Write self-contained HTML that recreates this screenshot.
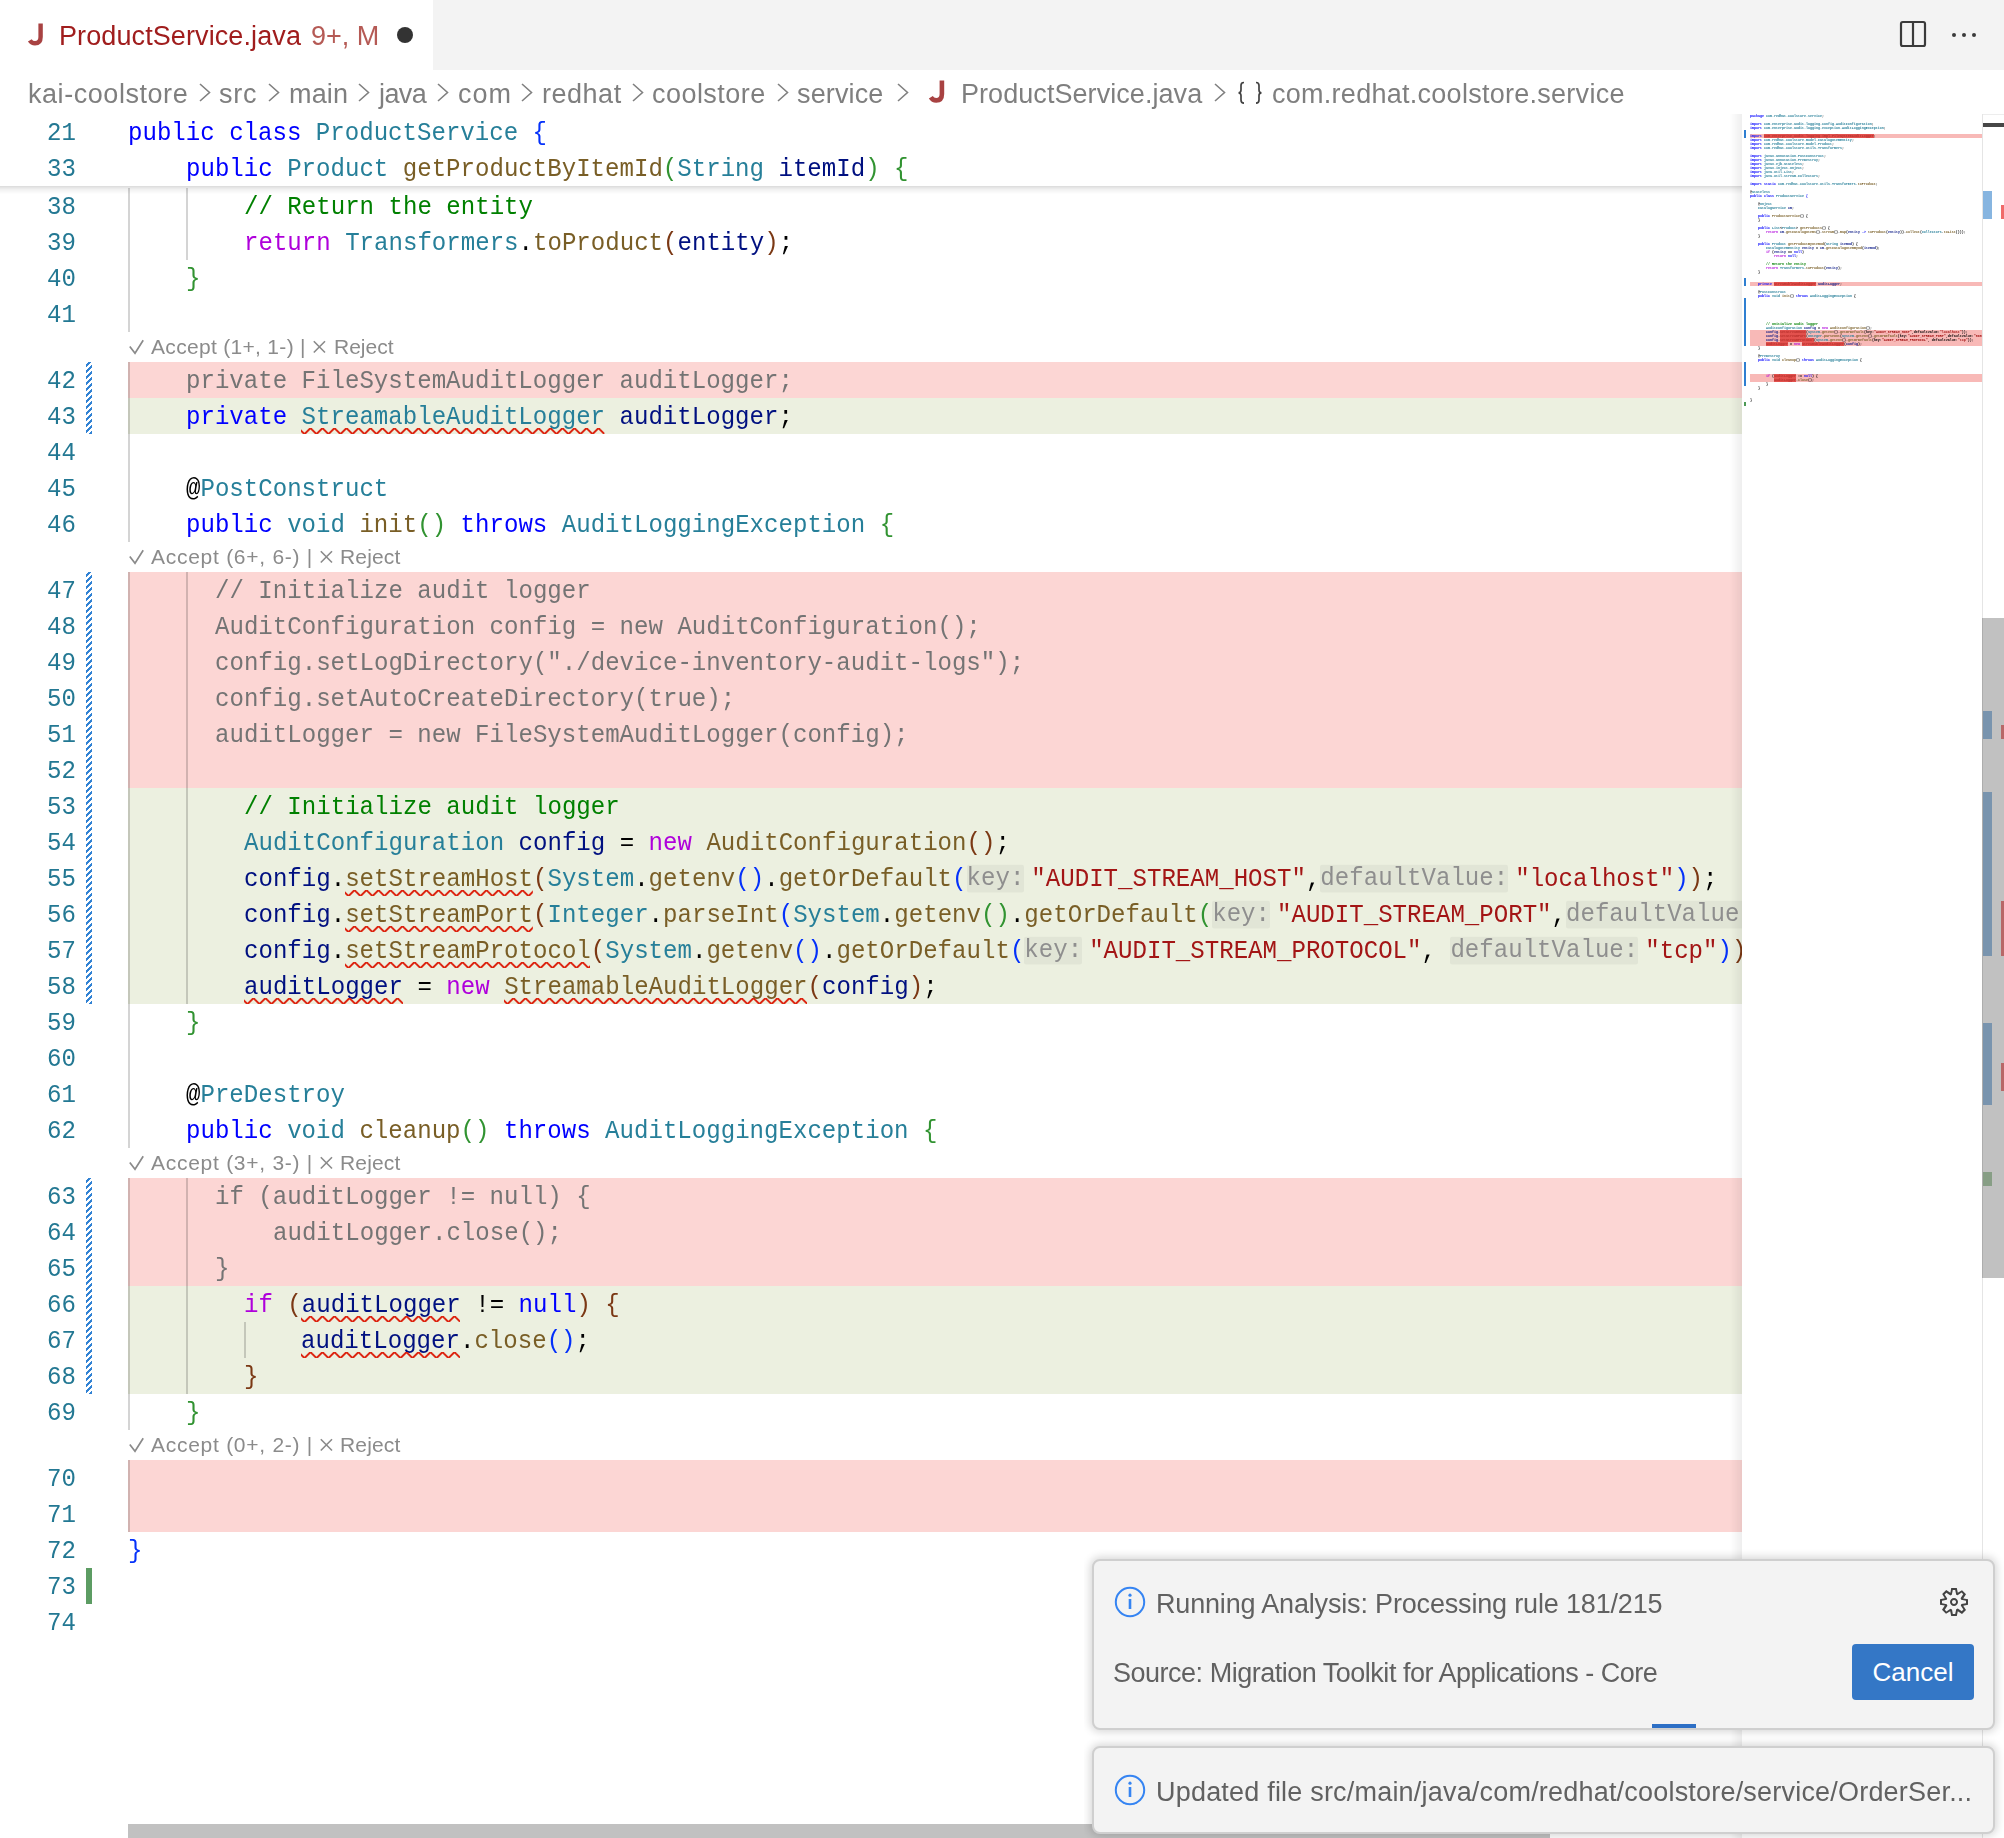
<!DOCTYPE html>
<html><head><meta charset="utf-8">
<style>
html,body{margin:0;padding:0}
body{width:2004px;height:1838px;overflow:hidden;background:#fff;position:relative;font-family:"Liberation Sans",sans-serif}
.tabbar{position:absolute;left:0;top:0;width:2004px;height:70px;background:#f3f3f3}
.tab{position:absolute;left:0;top:0;width:433px;height:70px;background:#fff}
.crumbs{position:absolute;left:0;top:70px;width:2004px;height:44px;background:#fff}
.crumb{position:absolute;top:2px;height:44px;line-height:44px;font-size:27px;color:#7f7f7f;white-space:pre}
.chev{position:absolute;top:13px}
.editor{position:absolute;left:0;top:114px;width:1742px;height:1724px;overflow:hidden}
.ed{position:absolute;left:0;top:-114px;width:1742px;height:1838px}
.bg{position:absolute;left:128px;width:1614px;height:36px}
.guide{position:absolute;width:2px;background:rgba(0,0,0,0.17)}
.ln{position:absolute;left:0;width:76px;text-align:right;height:36px;line-height:36px;font-family:"Liberation Mono",monospace;font-size:24.08px;color:#237893;white-space:pre;transform:translateY(1.7px) scaleY(1.07);transform-origin:0 18px}
.code{position:absolute;height:36px;line-height:36px;font-family:"Liberation Mono",monospace;font-size:24.08px;white-space:pre;transform:translateY(1.7px) scaleY(1.07);transform-origin:0 18px}
.hint{display:inline-block;background:rgba(0,0,0,0.045);color:#8e8e8e;line-height:26px;height:26px;vertical-align:top;margin-top:3.6px;margin-right:7px;border-radius:2px}
.sq{text-decoration:underline wavy #e51400;text-decoration-thickness:2px;text-underline-offset:5px}
.lens{position:absolute;left:127px;height:30px;line-height:30px;font-size:21px;letter-spacing:0.2px;color:#8b8b8b;white-space:pre}
.hatch{position:absolute;left:86px;width:6px;background:repeating-linear-gradient(135deg,#3182d4 0 2.1px,transparent 2.1px 4.24px);background-position:0 3px}
.sticky{position:absolute;left:0;top:114px;width:1742px;height:72px;background:#fff;overflow:hidden}
.toast{position:absolute;width:899px;background:#f3f3f3;border:2px solid #cfcfcf;border-radius:8px;box-shadow:0 0 8px 2px rgba(0,0,0,0.16)}
.ttext{position:absolute;font-size:27px;color:#616161;white-space:pre}
.mm div{position:absolute}
.mm{position:absolute;left:0;top:0;width:1982px;height:1838px;overflow:hidden;clip-path:inset(0 0 0 1742px)}
.mmt{font-family:"Liberation Mono",monospace;font-size:3.333px;line-height:4px;height:4px;white-space:pre;font-weight:bold;will-change:transform}
.code,.ln,.crumb,.ttext,.lens,.tabtxt{will-change:transform}
</style></head><body>
<div class="tabbar">
  <div class="tab">
    <svg style="position:absolute;left:22px;top:16px" width="34" height="34" viewBox="0 0 34 34"><path d="M18.6 7.4 L18.6 21 C18.6 25.6 16.2 27.3 13 27.3 C10.6 27.3 9 26.2 7.8 24.3" fill="none" stroke="#a84242" stroke-width="4.4"/></svg>
    <div class="tabtxt" style="position:absolute;left:58.5px;top:16px;font-size:27px;line-height:40px;color:#a01d1d;white-space:pre;letter-spacing:0.1px">ProductService.java</div>
    <div class="tabtxt" style="position:absolute;left:311px;top:16px;font-size:27px;line-height:40px;color:#b55a55;white-space:pre">9+, M</div>
    <div style="position:absolute;left:397px;top:27px;width:16px;height:16px;border-radius:50%;background:#333"></div>
  </div>
  <svg style="position:absolute;left:1896px;top:17px" width="34" height="34" viewBox="0 0 34 34"><rect x="5" y="5" width="24" height="24" rx="1.8" fill="none" stroke="#3b3b3b" stroke-width="2.2"/><line x1="17" y1="5" x2="17" y2="29" stroke="#3b3b3b" stroke-width="2.2"/></svg>
  <div style="position:absolute;left:1952px;top:33px;width:4px;height:4px;border-radius:50%;background:#3b3b3b"></div>
  <div style="position:absolute;left:1962px;top:33px;width:4px;height:4px;border-radius:50%;background:#3b3b3b"></div>
  <div style="position:absolute;left:1972px;top:33px;width:4px;height:4px;border-radius:50%;background:#3b3b3b"></div>
</div>
<div class="crumbs">
<div class="crumb" style="left:27.9px;letter-spacing:0.55px">kai-coolstore</div>
<div class="crumb" style="left:218.5px;letter-spacing:0.75px">src</div>
<div class="crumb" style="left:288.5px;letter-spacing:0.17px">main</div>
<div class="crumb" style="left:378.5px;letter-spacing:-0.6px">java</div>
<div class="crumb" style="left:457.5px;letter-spacing:1.0px">com</div>
<div class="crumb" style="left:541.5px;letter-spacing:0.52px">redhat</div>
<div class="crumb" style="left:652.2px;letter-spacing:0.45px">coolstore</div>
<div class="crumb" style="left:797.0px;letter-spacing:0.13px">service</div>
<div class="crumb" style="left:960.5px;letter-spacing:0.06px">ProductService.java</div>
<div class="crumb" style="left:1272px;letter-spacing:0.27px">com.redhat.coolstore.service</div>
<svg style="position:absolute;left:1237px;top:11px" width="27" height="24" viewBox="0 0 27 24"><path d="M7 1.5 C4.6 1.5 4 2.6 4 4.6 V9 C4 10.9 3.2 11.8 1.5 11.8 C3.2 11.8 4 12.7 4 14.6 V19 C4 21 4.6 22.2 7 22.2 M19 1.5 C21.4 1.5 22 2.6 22 4.6 V9 C22 10.9 22.8 11.8 24.5 11.8 C22.8 11.8 22 12.7 22 14.6 V19 C22 21 21.4 22.2 19 22.2" fill="none" stroke="#424242" stroke-width="1.7"/></svg>
<svg style="position:absolute;left:923px;top:3px" width="34" height="34" viewBox="0 0 34 34"><path d="M18.9 7.4 L18.9 21 C18.9 25.6 16.4 27.4 13.2 27.4 C10.7 27.4 9 26.3 7.8 24.3" fill="none" stroke="#a84242" stroke-width="4.6"/></svg>
<svg class="chev" style="left:198.7px" width="12" height="20" viewBox="0 0 12 20"><polyline points="1,1 10.5,9.5 1,18" fill="none" stroke="#808080" stroke-width="1.6"/></svg>
<svg class="chev" style="left:268.0px" width="12" height="20" viewBox="0 0 12 20"><polyline points="1,1 10.5,9.5 1,18" fill="none" stroke="#808080" stroke-width="1.6"/></svg>
<svg class="chev" style="left:357.7px" width="12" height="20" viewBox="0 0 12 20"><polyline points="1,1 10.5,9.5 1,18" fill="none" stroke="#808080" stroke-width="1.6"/></svg>
<svg class="chev" style="left:437.0px" width="12" height="20" viewBox="0 0 12 20"><polyline points="1,1 10.5,9.5 1,18" fill="none" stroke="#808080" stroke-width="1.6"/></svg>
<svg class="chev" style="left:521.0px" width="12" height="20" viewBox="0 0 12 20"><polyline points="1,1 10.5,9.5 1,18" fill="none" stroke="#808080" stroke-width="1.6"/></svg>
<svg class="chev" style="left:631.6px" width="12" height="20" viewBox="0 0 12 20"><polyline points="1,1 10.5,9.5 1,18" fill="none" stroke="#808080" stroke-width="1.6"/></svg>
<svg class="chev" style="left:777.0px" width="12" height="20" viewBox="0 0 12 20"><polyline points="1,1 10.5,9.5 1,18" fill="none" stroke="#808080" stroke-width="1.6"/></svg>
<svg class="chev" style="left:896.5px" width="12" height="20" viewBox="0 0 12 20"><polyline points="1,1 10.5,9.5 1,18" fill="none" stroke="#808080" stroke-width="1.6"/></svg>
<svg class="chev" style="left:1213.6px" width="12" height="20" viewBox="0 0 12 20"><polyline points="1,1 10.5,9.5 1,18" fill="none" stroke="#808080" stroke-width="1.6"/></svg>
</div>
<div class="editor"><div class="ed">
<div class="bg" style="top:362px;background:#fcd6d4"></div>
<div class="bg" style="top:398px;background:#ecf0e0"></div>
<div class="bg" style="top:572px;background:#fcd6d4"></div>
<div class="bg" style="top:608px;background:#fcd6d4"></div>
<div class="bg" style="top:644px;background:#fcd6d4"></div>
<div class="bg" style="top:680px;background:#fcd6d4"></div>
<div class="bg" style="top:716px;background:#fcd6d4"></div>
<div class="bg" style="top:752px;background:#fcd6d4"></div>
<div class="bg" style="top:788px;background:#ecf0e0"></div>
<div class="bg" style="top:824px;background:#ecf0e0"></div>
<div class="bg" style="top:860px;background:#ecf0e0"></div>
<div class="bg" style="top:896px;background:#ecf0e0"></div>
<div class="bg" style="top:932px;background:#ecf0e0"></div>
<div class="bg" style="top:968px;background:#ecf0e0"></div>
<div class="bg" style="top:1178px;background:#fcd6d4"></div>
<div class="bg" style="top:1214px;background:#fcd6d4"></div>
<div class="bg" style="top:1250px;background:#fcd6d4"></div>
<div class="bg" style="top:1286px;background:#ecf0e0"></div>
<div class="bg" style="top:1322px;background:#ecf0e0"></div>
<div class="bg" style="top:1358px;background:#ecf0e0"></div>
<div class="bg" style="top:1460px;background:#fcd6d4"></div>
<div class="bg" style="top:1496px;background:#fcd6d4"></div>
<div class="guide" style="left:128px;top:188px;height:144px"></div>
<div class="guide" style="left:128px;top:362px;height:180px"></div>
<div class="guide" style="left:128px;top:572px;height:576px"></div>
<div class="guide" style="left:128px;top:1178px;height:252px"></div>
<div class="guide" style="left:128px;top:1460px;height:72px"></div>
<div class="guide" style="left:186px;top:188px;height:72px"></div>
<div class="guide" style="left:186px;top:572px;height:432px"></div>
<div class="guide" style="left:186px;top:1178px;height:216px"></div>
<div class="guide" style="left:244px;top:1322px;height:36px"></div>
<div class="ln" style="top:188px">38</div>
<div class="ln" style="top:224px">39</div>
<div class="ln" style="top:260px">40</div>
<div class="ln" style="top:296px">41</div>
<div class="ln" style="top:362px">42</div>
<div class="ln" style="top:398px">43</div>
<div class="ln" style="top:434px">44</div>
<div class="ln" style="top:470px">45</div>
<div class="ln" style="top:506px">46</div>
<div class="ln" style="top:572px">47</div>
<div class="ln" style="top:608px">48</div>
<div class="ln" style="top:644px">49</div>
<div class="ln" style="top:680px">50</div>
<div class="ln" style="top:716px">51</div>
<div class="ln" style="top:752px">52</div>
<div class="ln" style="top:788px">53</div>
<div class="ln" style="top:824px">54</div>
<div class="ln" style="top:860px">55</div>
<div class="ln" style="top:896px">56</div>
<div class="ln" style="top:932px">57</div>
<div class="ln" style="top:968px">58</div>
<div class="ln" style="top:1004px">59</div>
<div class="ln" style="top:1040px">60</div>
<div class="ln" style="top:1076px">61</div>
<div class="ln" style="top:1112px">62</div>
<div class="ln" style="top:1178px">63</div>
<div class="ln" style="top:1214px">64</div>
<div class="ln" style="top:1250px">65</div>
<div class="ln" style="top:1286px">66</div>
<div class="ln" style="top:1322px">67</div>
<div class="ln" style="top:1358px">68</div>
<div class="ln" style="top:1394px">69</div>
<div class="ln" style="top:1460px">70</div>
<div class="ln" style="top:1496px">71</div>
<div class="ln" style="top:1532px">72</div>
<div class="ln" style="top:1568px">73</div>
<div class="ln" style="top:1604px">74</div>
<div class="code" style="top:188px;left:243.60px"><span style="color:#008000">// Return the entity</span></div>
<div class="code" style="top:224px;left:243.60px"><span style="color:#af00db">return</span><span style="color:#000000"> </span><span style="color:#267f99">Transformers</span><span style="color:#000000">.</span><span style="color:#795e26">toProduct</span><span style="color:#7b3814">(</span><span style="color:#001080">entity</span><span style="color:#7b3814">)</span><span style="color:#000000">;</span></div>
<div class="code" style="top:260px;left:185.80px"><span style="color:#319331">}</span></div>
<div class="code" style="top:362px;left:185.80px"><span style="color:#747474">private FileSystemAuditLogger auditLogger;</span></div>
<div class="code" style="top:398px;left:185.80px"><span style="color:#0000ff">private</span><span style="color:#000000"> </span><span style="color:#267f99">StreamableAuditLogger</span><span style="color:#000000"> </span><span style="color:#001080">auditLogger</span><span style="color:#000000">;</span></div>
<div class="code" style="top:470px;left:185.80px"><span style="color:#000000">@</span><span style="color:#267f99">PostConstruct</span></div>
<div class="code" style="top:506px;left:185.80px"><span style="color:#0000ff">public</span><span style="color:#000000"> </span><span style="color:#267f99">void</span><span style="color:#000000"> </span><span style="color:#795e26">init</span><span style="color:#319331">()</span><span style="color:#000000"> </span><span style="color:#0000ff">throws</span><span style="color:#000000"> </span><span style="color:#267f99">AuditLoggingException</span><span style="color:#000000"> </span><span style="color:#319331">{</span></div>
<div class="code" style="top:572px;left:214.70px"><span style="color:#747474">// Initialize audit logger</span></div>
<div class="code" style="top:608px;left:214.70px"><span style="color:#747474">AuditConfiguration config = new AuditConfiguration();</span></div>
<div class="code" style="top:644px;left:214.70px"><span style="color:#747474">config.setLogDirectory("./device-inventory-audit-logs");</span></div>
<div class="code" style="top:680px;left:214.70px"><span style="color:#747474">config.setAutoCreateDirectory(true);</span></div>
<div class="code" style="top:716px;left:214.70px"><span style="color:#747474">auditLogger = new FileSystemAuditLogger(config);</span></div>
<div class="code" style="top:788px;left:243.60px"><span style="color:#008000">// Initialize audit logger</span></div>
<div class="code" style="top:824px;left:243.60px"><span style="color:#267f99">AuditConfiguration</span><span style="color:#000000"> </span><span style="color:#001080">config</span><span style="color:#000000"> = </span><span style="color:#af00db">new</span><span style="color:#000000"> </span><span style="color:#795e26">AuditConfiguration</span><span style="color:#7b3814">()</span><span style="color:#000000">;</span></div>
<div class="code" style="top:860px;left:243.60px"><span style="color:#001080">config</span><span style="color:#000000">.</span><span style="color:#795e26">setStreamHost</span><span style="color:#7b3814">(</span><span style="color:#267f99">System</span><span style="color:#000000">.</span><span style="color:#795e26">getenv</span><span style="color:#0431fa">()</span><span style="color:#000000">.</span><span style="color:#795e26">getOrDefault</span><span style="color:#0431fa">(</span><span class="hint">key:</span><span style="color:#a31515">"AUDIT_STREAM_HOST"</span><span style="color:#000000">,</span><span class="hint">defaultValue:</span><span style="color:#a31515">"localhost"</span><span style="color:#0431fa">)</span><span style="color:#7b3814">)</span><span style="color:#000000">;</span></div>
<div class="code" style="top:896px;left:243.60px"><span style="color:#001080">config</span><span style="color:#000000">.</span><span style="color:#795e26">setStreamPort</span><span style="color:#7b3814">(</span><span style="color:#267f99">Integer</span><span style="color:#000000">.</span><span style="color:#795e26">parseInt</span><span style="color:#0431fa">(</span><span style="color:#267f99">System</span><span style="color:#000000">.</span><span style="color:#795e26">getenv</span><span style="color:#319331">()</span><span style="color:#000000">.</span><span style="color:#795e26">getOrDefault</span><span style="color:#319331">(</span><span class="hint">key:</span><span style="color:#a31515">"AUDIT_STREAM_PORT"</span><span style="color:#000000">,</span><span class="hint">defaultValue:</span><span style="color:#a31515">"8080"</span><span style="color:#319331">)</span><span style="color:#0431fa">)</span><span style="color:#7b3814">)</span><span style="color:#000000">;</span></div>
<div class="code" style="top:932px;left:243.60px"><span style="color:#001080">config</span><span style="color:#000000">.</span><span style="color:#795e26">setStreamProtocol</span><span style="color:#7b3814">(</span><span style="color:#267f99">System</span><span style="color:#000000">.</span><span style="color:#795e26">getenv</span><span style="color:#0431fa">()</span><span style="color:#000000">.</span><span style="color:#795e26">getOrDefault</span><span style="color:#0431fa">(</span><span class="hint">key:</span><span style="color:#a31515">"AUDIT_STREAM_PROTOCOL"</span><span style="color:#000000">, </span><span class="hint">defaultValue:</span><span style="color:#a31515">"tcp"</span><span style="color:#0431fa">)</span><span style="color:#7b3814">)</span><span style="color:#000000">;</span></div>
<div class="code" style="top:968px;left:243.60px"><span style="color:#001080">auditLogger</span><span style="color:#000000"> = </span><span style="color:#af00db">new</span><span style="color:#000000"> </span><span style="color:#795e26">StreamableAuditLogger</span><span style="color:#7b3814">(</span><span style="color:#001080">config</span><span style="color:#7b3814">)</span><span style="color:#000000">;</span></div>
<div class="code" style="top:1004px;left:185.80px"><span style="color:#319331">}</span></div>
<div class="code" style="top:1076px;left:185.80px"><span style="color:#000000">@</span><span style="color:#267f99">PreDestroy</span></div>
<div class="code" style="top:1112px;left:185.80px"><span style="color:#0000ff">public</span><span style="color:#000000"> </span><span style="color:#267f99">void</span><span style="color:#000000"> </span><span style="color:#795e26">cleanup</span><span style="color:#319331">()</span><span style="color:#000000"> </span><span style="color:#0000ff">throws</span><span style="color:#000000"> </span><span style="color:#267f99">AuditLoggingException</span><span style="color:#000000"> </span><span style="color:#319331">{</span></div>
<div class="code" style="top:1178px;left:214.70px"><span style="color:#747474">if (auditLogger != null) {</span></div>
<div class="code" style="top:1214px;left:272.50px"><span style="color:#747474">auditLogger.close();</span></div>
<div class="code" style="top:1250px;left:214.70px"><span style="color:#747474">}</span></div>
<div class="code" style="top:1286px;left:243.60px"><span style="color:#af00db">if</span><span style="color:#000000"> </span><span style="color:#7b3814">(</span><span style="color:#001080">auditLogger</span><span style="color:#000000"> != </span><span style="color:#0000ff">null</span><span style="color:#7b3814">)</span><span style="color:#000000"> </span><span style="color:#7b3814">{</span></div>
<div class="code" style="top:1322px;left:301.40px"><span style="color:#001080">auditLogger</span><span style="color:#000000">.</span><span style="color:#795e26">close</span><span style="color:#0431fa">()</span><span style="color:#000000">;</span></div>
<div class="code" style="top:1358px;left:243.60px"><span style="color:#7b3814">}</span></div>
<div class="code" style="top:1394px;left:185.80px"><span style="color:#319331">}</span></div>
<div class="code" style="top:1532px;left:128.00px"><span style="color:#0431fa">}</span></div>
<svg style="position:absolute;left:301.40px;top:428px" width="303.45" height="6"><rect width="303.45" height="6" fill="url(#sqp)"/></svg>
<svg style="position:absolute;left:344.75px;top:890px" width="187.85" height="6"><rect width="187.85" height="6" fill="url(#sqp)"/></svg>
<svg style="position:absolute;left:344.75px;top:926px" width="187.85" height="6"><rect width="187.85" height="6" fill="url(#sqp)"/></svg>
<svg style="position:absolute;left:344.75px;top:962px" width="245.65" height="6"><rect width="245.65" height="6" fill="url(#sqp)"/></svg>
<svg style="position:absolute;left:243.60px;top:998px" width="158.95" height="6"><rect width="158.95" height="6" fill="url(#sqp)"/></svg>
<svg style="position:absolute;left:503.70px;top:998px" width="303.45" height="6"><rect width="303.45" height="6" fill="url(#sqp)"/></svg>
<svg style="position:absolute;left:301.40px;top:1316px" width="158.95" height="6"><rect width="158.95" height="6" fill="url(#sqp)"/></svg>
<svg style="position:absolute;left:301.40px;top:1352px" width="158.95" height="6"><rect width="158.95" height="6" fill="url(#sqp)"/></svg>
<svg width="0" height="0" style="position:absolute"><defs><pattern id="sqp" patternUnits="userSpaceOnUse" width="12" height="6"><g fill="#dc2410"><polygon points="11,0 5,6 2.2,6 8.2,0"/><polygon points="8,0 12,4 12,1.2 10.8,0"/><polygon points="0,4 2,6 4.8,6 0,1.2"/></g></pattern></defs></svg>
<svg style="position:absolute;left:128px;top:332px" width="20" height="30"><polyline points="1.8,14.5 7,21.3 15.2,8.3" fill="none" stroke="#8a8a8a" stroke-width="1.7"/></svg>
<div class="lens" style="top:332px;left:151px;letter-spacing:0.31px">Accept (1+, 1-) |</div>
<svg style="position:absolute;left:313.0px;top:332px" width="14" height="30"><path d="M0.8 9.3 L12 20.5 M12 9.3 L0.8 20.5" fill="none" stroke="#8a8a8a" stroke-width="1.6"/></svg>
<div class="lens" style="top:332px;left:334.1px;letter-spacing:0.0px">Reject</div>
<svg style="position:absolute;left:128px;top:542px" width="20" height="30"><polyline points="1.8,14.5 7,21.3 15.2,8.3" fill="none" stroke="#8a8a8a" stroke-width="1.7"/></svg>
<div class="lens" style="top:542px;left:151px;letter-spacing:0.73px">Accept (6+, 6-) |</div>
<svg style="position:absolute;left:319.5px;top:542px" width="14" height="30"><path d="M0.8 9.3 L12 20.5 M12 9.3 L0.8 20.5" fill="none" stroke="#8a8a8a" stroke-width="1.6"/></svg>
<div class="lens" style="top:542px;left:339.7px;letter-spacing:0.15px">Reject</div>
<svg style="position:absolute;left:128px;top:1148px" width="20" height="30"><polyline points="1.8,14.5 7,21.3 15.2,8.3" fill="none" stroke="#8a8a8a" stroke-width="1.7"/></svg>
<div class="lens" style="top:1148px;left:151px;letter-spacing:0.73px">Accept (3+, 3-) |</div>
<svg style="position:absolute;left:319.5px;top:1148px" width="14" height="30"><path d="M0.8 9.3 L12 20.5 M12 9.3 L0.8 20.5" fill="none" stroke="#8a8a8a" stroke-width="1.6"/></svg>
<div class="lens" style="top:1148px;left:339.7px;letter-spacing:0.15px">Reject</div>
<svg style="position:absolute;left:128px;top:1430px" width="20" height="30"><polyline points="1.8,14.5 7,21.3 15.2,8.3" fill="none" stroke="#8a8a8a" stroke-width="1.7"/></svg>
<div class="lens" style="top:1430px;left:151px;letter-spacing:0.73px">Accept (0+, 2-) |</div>
<svg style="position:absolute;left:319.5px;top:1430px" width="14" height="30"><path d="M0.8 9.3 L12 20.5 M12 9.3 L0.8 20.5" fill="none" stroke="#8a8a8a" stroke-width="1.6"/></svg>
<div class="lens" style="top:1430px;left:339.7px;letter-spacing:0.15px">Reject</div>
<div class="hatch" style="top:362px;height:72px"></div>
<div class="hatch" style="top:572px;height:432px"></div>
<div class="hatch" style="top:1178px;height:216px"></div>
<div style="position:absolute;left:86px;top:1568px;width:6px;height:36px;background:#5c9c63"></div>
</div></div>
<div class="sticky"><div style="position:absolute;left:0;top:-114px">
<div class="ln" style="top:114px">21</div>
<div class="code" style="top:114px;left:128.00px"><span style="color:#0000ff">public</span><span style="color:#000000"> </span><span style="color:#0000ff">class</span><span style="color:#000000"> </span><span style="color:#267f99">ProductService</span><span style="color:#000000"> </span><span style="color:#0431fa">{</span></div>
<div class="ln" style="top:150px">33</div>
<div class="code" style="top:150px;left:185.80px"><span style="color:#0000ff">public</span><span style="color:#000000"> </span><span style="color:#267f99">Product</span><span style="color:#000000"> </span><span style="color:#795e26">getProductByItemId</span><span style="color:#319331">(</span><span style="color:#267f99">String</span><span style="color:#000000"> </span><span style="color:#001080">itemId</span><span style="color:#319331">)</span><span style="color:#000000"> </span><span style="color:#319331">{</span></div>
</div></div>
<div style="position:absolute;left:0;top:186px;width:1742px;height:8px;background:linear-gradient(to bottom,rgba(0,0,0,0.14),rgba(0,0,0,0.06) 40%,rgba(0,0,0,0))"></div>
<div style="position:absolute;left:1730px;top:114px;width:12px;height:1724px;background:linear-gradient(to right,rgba(0,0,0,0),rgba(0,0,0,0.065))"></div>
<div class="mm"><div class="mmt" style="left:1750px;top:114px"><span style="color:#0000ff">package</span><span style="color:#000000"> </span><span style="color:#267f99">com.redhat.coolstore.service</span><span style="color:#000000">;</span></div><div class="mmt" style="left:1750px;top:122px"><span style="color:#0000ff">import</span><span style="color:#000000"> </span><span style="color:#267f99">com.enterprise.audit.logging.config.AuditConfiguration</span><span style="color:#000000">;</span></div><div class="mmt" style="left:1750px;top:126px"><span style="color:#0000ff">import</span><span style="color:#000000"> </span><span style="color:#267f99">com.enterprise.audit.logging.exception.AuditLoggingException</span><span style="color:#000000">;</span></div><div style="left:1750px;top:134px;width:232px;height:4px;background:#f8b9b7"></div><div style="left:1764px;top:134px;width:110px;height:4px;background:#e2514d"></div><div class="mmt" style="left:1750px;top:134px"><span style="color:#0000ff">import</span><span style="color:#000000"> </span><span style="color:#b8302c">com.enterprise.audit.logging.impl.FileSystemAuditLogger</span><span style="color:#000000">;</span></div><div class="mmt" style="left:1750px;top:138px"><span style="color:#0000ff">import</span><span style="color:#000000"> </span><span style="color:#267f99">com.redhat.coolstore.model.CatalogItemEntity</span><span style="color:#000000">;</span></div><div class="mmt" style="left:1750px;top:142px"><span style="color:#0000ff">import</span><span style="color:#000000"> </span><span style="color:#267f99">com.redhat.coolstore.model.Product</span><span style="color:#000000">;</span></div><div class="mmt" style="left:1750px;top:146px"><span style="color:#0000ff">import</span><span style="color:#000000"> </span><span style="color:#267f99">com.redhat.coolstore.utils.Transformers</span><span style="color:#000000">;</span></div><div class="mmt" style="left:1750px;top:154px"><span style="color:#0000ff">import</span><span style="color:#000000"> </span><span style="color:#267f99">javax.annotation.PostConstruct</span><span style="color:#000000">;</span></div><div class="mmt" style="left:1750px;top:158px"><span style="color:#0000ff">import</span><span style="color:#000000"> </span><span style="color:#267f99">javax.annotation.PreDestroy</span><span style="color:#000000">;</span></div><div class="mmt" style="left:1750px;top:162px"><span style="color:#0000ff">import</span><span style="color:#000000"> </span><span style="color:#267f99">javax.ejb.Stateless</span><span style="color:#000000">;</span></div><div class="mmt" style="left:1750px;top:166px"><span style="color:#0000ff">import</span><span style="color:#000000"> </span><span style="color:#267f99">javax.inject.Inject</span><span style="color:#000000">;</span></div><div class="mmt" style="left:1750px;top:170px"><span style="color:#0000ff">import</span><span style="color:#000000"> </span><span style="color:#267f99">java.util.List</span><span style="color:#000000">;</span></div><div class="mmt" style="left:1750px;top:174px"><span style="color:#0000ff">import</span><span style="color:#000000"> </span><span style="color:#267f99">java.util.stream.Collectors</span><span style="color:#000000">;</span></div><div class="mmt" style="left:1750px;top:182px"><span style="color:#0000ff">import</span><span style="color:#000000"> </span><span style="color:#0000ff">static</span><span style="color:#000000"> </span><span style="color:#267f99">com.redhat.coolstore.utils.Transformers.</span><span style="color:#795e26">toProduct</span><span style="color:#000000">;</span></div><div class="mmt" style="left:1750px;top:190px"><span style="color:#000000">@</span><span style="color:#267f99">Stateless</span></div><div class="mmt" style="left:1750px;top:194px"><span style="color:#0000ff">public</span><span style="color:#000000"> </span><span style="color:#0000ff">class</span><span style="color:#000000"> </span><span style="color:#267f99">ProductService</span><span style="color:#000000"> </span><span style="color:#0000ff">{</span></div><div class="mmt" style="left:1758px;top:202px"><span style="color:#000000">@</span><span style="color:#267f99">Inject</span></div><div class="mmt" style="left:1758px;top:206px"><span style="color:#267f99">CatalogService</span><span style="color:#000000"> </span><span style="color:#001080">cm</span><span style="color:#000000">;</span></div><div class="mmt" style="left:1758px;top:214px"><span style="color:#0000ff">public</span><span style="color:#000000"> </span><span style="color:#795e26">ProductService</span><span style="color:#000000">()</span><span style="color:#000000"> </span><span style="color:#000000">{</span></div><div class="mmt" style="left:1758px;top:218px"><span style="color:#000000">}</span></div><div class="mmt" style="left:1758px;top:226px"><span style="color:#0000ff">public</span><span style="color:#000000"> </span><span style="color:#267f99">List</span><span style="color:#000000">&lt;</span><span style="color:#267f99">Product</span><span style="color:#000000">&gt;</span><span style="color:#000000"> </span><span style="color:#795e26">getProducts</span><span style="color:#000000">()</span><span style="color:#000000"> </span><span style="color:#000000">{</span></div><div class="mmt" style="left:1766px;top:230px"><span style="color:#af00db">return</span><span style="color:#000000"> </span><span style="color:#001080">cm</span><span style="color:#000000">.</span><span style="color:#795e26">getCatalogItems</span><span style="color:#000000">().</span><span style="color:#795e26">stream</span><span style="color:#000000">().</span><span style="color:#795e26">map</span><span style="color:#000000">(</span><span style="color:#001080">entity</span><span style="color:#000000"> </span><span style="color:#0000ff">-&gt;</span><span style="color:#000000"> </span><span style="color:#795e26">toProduct</span><span style="color:#000000">(</span><span style="color:#001080">entity</span><span style="color:#000000">)).</span><span style="color:#795e26">collect</span><span style="color:#000000">(</span><span style="color:#267f99">Collectors</span><span style="color:#000000">.</span><span style="color:#795e26">toList</span><span style="color:#000000">()));</span></div><div class="mmt" style="left:1758px;top:234px"><span style="color:#000000">}</span></div><div class="mmt" style="left:1758px;top:242px"><span style="color:#0000ff">public</span><span style="color:#000000"> </span><span style="color:#267f99">Product</span><span style="color:#000000"> </span><span style="color:#795e26">getProductByItemId</span><span style="color:#000000">(</span><span style="color:#267f99">String</span><span style="color:#000000"> </span><span style="color:#001080">itemId</span><span style="color:#000000">)</span><span style="color:#000000"> </span><span style="color:#000000">{</span></div><div class="mmt" style="left:1766px;top:246px"><span style="color:#267f99">CatalogItemEntity</span><span style="color:#000000"> </span><span style="color:#001080">entity</span><span style="color:#000000"> = </span><span style="color:#001080">cm</span><span style="color:#000000">.</span><span style="color:#795e26">getCatalogItemById</span><span style="color:#000000">(</span><span style="color:#001080">itemId</span><span style="color:#000000">);</span></div><div class="mmt" style="left:1766px;top:250px"><span style="color:#af00db">if</span><span style="color:#000000"> (</span><span style="color:#001080">entity</span><span style="color:#000000"> == </span><span style="color:#0000ff">null</span><span style="color:#000000">)</span></div><div class="mmt" style="left:1774px;top:254px"><span style="color:#af00db">return</span><span style="color:#000000"> </span><span style="color:#0000ff">null</span><span style="color:#000000">;</span></div><div class="mmt" style="left:1766px;top:262px"><span style="color:#008000">// Return the entity</span></div><div class="mmt" style="left:1766px;top:266px"><span style="color:#af00db">return</span><span style="color:#000000"> </span><span style="color:#267f99">Transformers</span><span style="color:#000000">.</span><span style="color:#795e26">toProduct</span><span style="color:#000000">(</span><span style="color:#001080">entity</span><span style="color:#000000">);</span></div><div class="mmt" style="left:1758px;top:270px"><span style="color:#000000">}</span></div><div style="left:1750px;top:282px;width:232px;height:4px;background:#f8b9b7"></div><div style="left:1774px;top:282px;width:42px;height:4px;background:#e2514d"></div><div class="mmt" style="left:1758px;top:282px"><span style="color:#0000ff">private</span><span style="color:#000000"> </span><span style="color:#b8302c">StreamableAuditLogger</span><span style="color:#000000"> </span><span style="color:#001080">auditLogger</span><span style="color:#000000">;</span></div><div class="mmt" style="left:1758px;top:290px"><span style="color:#000000">@</span><span style="color:#267f99">PostConstruct</span></div><div class="mmt" style="left:1758px;top:294px"><span style="color:#0000ff">public</span><span style="color:#000000"> </span><span style="color:#267f99">void</span><span style="color:#000000"> </span><span style="color:#795e26">init</span><span style="color:#000000">()</span><span style="color:#000000"> </span><span style="color:#0000ff">throws</span><span style="color:#000000"> </span><span style="color:#267f99">AuditLoggingException</span><span style="color:#000000"> </span><span style="color:#000000">{</span></div><div class="mmt" style="left:1766px;top:322px"><span style="color:#008000">// Initialize audit logger</span></div><div class="mmt" style="left:1766px;top:326px"><span style="color:#267f99">AuditConfiguration</span><span style="color:#000000"> </span><span style="color:#001080">config</span><span style="color:#000000"> = </span><span style="color:#af00db">new</span><span style="color:#000000"> </span><span style="color:#795e26">AuditConfiguration</span><span style="color:#000000">();</span></div><div style="left:1750px;top:330px;width:232px;height:4px;background:#f8b9b7"></div><div style="left:1780px;top:330px;width:26px;height:4px;background:#e2514d"></div><div class="mmt" style="left:1766px;top:330px"><span style="color:#001080">config</span><span style="color:#000000">.</span><span style="color:#b8302c">setStreamHost</span><span style="color:#000000">(</span><span style="color:#267f99">System</span><span style="color:#000000">.</span><span style="color:#795e26">getenv</span><span style="color:#000000">().</span><span style="color:#795e26">getOrDefault</span><span style="color:#000000">(</span><span style="color:#000000">key:</span><span style="color:#a31515">&quot;AUDIT_STREAM_HOST&quot;</span><span style="color:#000000">,</span><span style="color:#000000">defaultValue:</span><span style="color:#a31515">&quot;localhost&quot;</span><span style="color:#000000">));</span></div><div style="left:1750px;top:334px;width:232px;height:4px;background:#f8b9b7"></div><div style="left:1780px;top:334px;width:26px;height:4px;background:#e2514d"></div><div class="mmt" style="left:1766px;top:334px"><span style="color:#001080">config</span><span style="color:#000000">.</span><span style="color:#b8302c">setStreamPort</span><span style="color:#000000">(</span><span style="color:#267f99">Integer</span><span style="color:#000000">.</span><span style="color:#795e26">parseInt</span><span style="color:#000000">(</span><span style="color:#267f99">System</span><span style="color:#000000">.</span><span style="color:#795e26">getenv</span><span style="color:#000000">().</span><span style="color:#795e26">getOrDefault</span><span style="color:#000000">(</span><span style="color:#000000">key:</span><span style="color:#a31515">&quot;AUDIT_STREAM_PORT&quot;</span><span style="color:#000000">,</span><span style="color:#000000">defaultValue:</span><span style="color:#a31515">&quot;8080&quot;</span><span style="color:#000000">)));</span></div><div style="left:1750px;top:338px;width:232px;height:4px;background:#f8b9b7"></div><div style="left:1780px;top:338px;width:34px;height:4px;background:#e2514d"></div><div class="mmt" style="left:1766px;top:338px"><span style="color:#001080">config</span><span style="color:#000000">.</span><span style="color:#b8302c">setStreamProtocol</span><span style="color:#000000">(</span><span style="color:#267f99">System</span><span style="color:#000000">.</span><span style="color:#795e26">getenv</span><span style="color:#000000">().</span><span style="color:#795e26">getOrDefault</span><span style="color:#000000">(</span><span style="color:#000000">key:</span><span style="color:#a31515">&quot;AUDIT_STREAM_PROTOCOL&quot;</span><span style="color:#000000">, </span><span style="color:#000000">defaultValue:</span><span style="color:#a31515">&quot;tcp&quot;</span><span style="color:#000000">));</span></div><div style="left:1750px;top:342px;width:232px;height:4px;background:#f8b9b7"></div><div style="left:1766px;top:342px;width:22px;height:4px;background:#e2514d"></div><div style="left:1802px;top:342px;width:42px;height:4px;background:#e2514d"></div><div class="mmt" style="left:1766px;top:342px"><span style="color:#b8302c">auditLogger</span><span style="color:#000000"> = </span><span style="color:#af00db">new</span><span style="color:#000000"> </span><span style="color:#b8302c">StreamableAuditLogger</span><span style="color:#000000">(</span><span style="color:#001080">config</span><span style="color:#000000">);</span></div><div class="mmt" style="left:1758px;top:346px"><span style="color:#000000">}</span></div><div class="mmt" style="left:1758px;top:354px"><span style="color:#000000">@</span><span style="color:#267f99">PreDestroy</span></div><div class="mmt" style="left:1758px;top:358px"><span style="color:#0000ff">public</span><span style="color:#000000"> </span><span style="color:#267f99">void</span><span style="color:#000000"> </span><span style="color:#795e26">cleanup</span><span style="color:#000000">()</span><span style="color:#000000"> </span><span style="color:#0000ff">throws</span><span style="color:#000000"> </span><span style="color:#267f99">AuditLoggingException</span><span style="color:#000000"> </span><span style="color:#000000">{</span></div><div style="left:1750px;top:374px;width:232px;height:4px;background:#f8b9b7"></div><div style="left:1774px;top:374px;width:22px;height:4px;background:#e2514d"></div><div class="mmt" style="left:1766px;top:374px"><span style="color:#af00db">if</span><span style="color:#000000"> (</span><span style="color:#b8302c">auditLogger</span><span style="color:#000000"> != </span><span style="color:#0000ff">null</span><span style="color:#000000">) {</span></div><div style="left:1750px;top:378px;width:232px;height:4px;background:#f8b9b7"></div><div style="left:1774px;top:378px;width:22px;height:4px;background:#e2514d"></div><div class="mmt" style="left:1774px;top:378px"><span style="color:#b8302c">auditLogger</span><span style="color:#000000">.</span><span style="color:#795e26">close</span><span style="color:#000000">();</span></div><div class="mmt" style="left:1766px;top:382px"><span style="color:#000000">}</span></div><div class="mmt" style="left:1758px;top:386px"><span style="color:#000000">}</span></div><div class="mmt" style="left:1750px;top:398px"><span style="color:#000000">}</span></div><div style="left:1744px;top:130px;width:2px;height:8px;background:#2f7fd1"></div><div style="left:1744px;top:278px;width:2px;height:8px;background:#2f7fd1"></div><div style="left:1744px;top:298px;width:2px;height:48px;background:#2f7fd1"></div><div style="left:1744px;top:362px;width:2px;height:24px;background:#2f7fd1"></div><div style="left:1744px;top:402px;width:2px;height:4px;background:#4d9a55"></div></div>
<div style="position:absolute;left:128px;top:1824px;width:1422px;height:14px;background:#c1c1c1"></div>
<div style="position:absolute;left:1983px;top:123px;width:21px;height:4px;background:#474747"></div>
<div style="position:absolute;left:1983px;top:191px;width:9px;height:28px;background:#87b5e0"></div>
<div style="position:absolute;left:1983px;top:711px;width:9px;height:28px;background:#87b5e0"></div>
<div style="position:absolute;left:1983px;top:792px;width:9px;height:164px;background:#87b5e0"></div>
<div style="position:absolute;left:1983px;top:1023px;width:9px;height:82px;background:#87b5e0"></div>
<div style="position:absolute;left:2001px;top:205px;width:3px;height:14px;background:#f06a6a"></div>
<div style="position:absolute;left:2001px;top:725px;width:3px;height:14px;background:#f06a6a"></div>
<div style="position:absolute;left:2001px;top:901px;width:3px;height:55px;background:#f06a6a"></div>
<div style="position:absolute;left:2001px;top:1063px;width:3px;height:28px;background:#f06a6a"></div>
<div style="position:absolute;left:1983px;top:1172px;width:9px;height:14px;background:#9ec59b"></div>
<div style="position:absolute;left:1982px;top:618px;width:22px;height:660px;background:rgba(100,100,100,0.4)"></div>
<div style="position:absolute;left:1982px;top:114px;width:1px;height:1724px;background:rgba(0,0,0,0.1)"></div>
<div style="position:absolute;left:1983px;top:114px;width:21px;height:1px;background:rgba(0,0,0,0.07)"></div>
<div style="position:absolute;left:1084px;top:1549px;width:920px;height:289px;overflow:hidden"><div class="toast" style="left:8px;top:10px;height:167px"></div><div class="toast" style="left:8px;top:197px;height:84px"></div></div>
<svg style="position:absolute;left:1113px;top:1585px" width="34" height="34" viewBox="0 0 34 34"><circle cx="17" cy="17" r="14.2" fill="none" stroke="#3584f2" stroke-width="2"/><rect x="15.7" y="14" width="2.6" height="10" fill="#3584f2"/><circle cx="17" cy="10.2" r="1.6" fill="#3584f2"/></svg>
<svg style="position:absolute;left:1113px;top:1773px" width="34" height="34" viewBox="0 0 34 34"><circle cx="17" cy="17" r="14.2" fill="none" stroke="#3584f2" stroke-width="2"/><rect x="15.7" y="14" width="2.6" height="10" fill="#3584f2"/><circle cx="17" cy="10.2" r="1.6" fill="#3584f2"/></svg>
<div class="ttext" style="left:1156px;top:1585.5px;line-height:36px;letter-spacing:-0.17px">Running Analysis: Processing rule 181/215</div>
<div class="ttext" style="left:1113px;top:1655px;line-height:36px;letter-spacing:-0.49px">Source: Migration Toolkit for Applications - Core</div>
<div class="ttext" style="left:1156px;top:1773.5px;line-height:36px;letter-spacing:0.2px">Updated file src/main/java/com/redhat/coolstore/service/OrderSer...</div>
<svg style="position:absolute;left:1938px;top:1586px" width="32" height="32" viewBox="0 0 16 16"><path fill="#424242" fill-rule="evenodd" d="M9.1 4.4L8.6 2H7.4l-.5 2.4-.7.3-2-1.3-.9.8 1.3 2-.2.7-2.4.5v1.2l2.4.5.3.8-1.3 2 .8.8 2-1.3.8.3.4 2.3h1.2l.5-2.4.8-.3 2 1.3.8-.8-1.3-2 .3-.8 2.3-.4V7.4l-2.4-.5-.3-.8 1.3-2-.8-.8-2 1.3-.7-.2zM9.4 1l.5 2.4L12 2.1l2 2-1.4 2.1 2.4.4v2.8l-2.4.5L14 12l-2 2-2.1-1.4-.5 2.4H6.6l-.5-2.4L4 13.9l-2-2 1.4-2.1L1 9.4V6.6l2.4-.5L2.1 4l2-2 2.1 1.4.4-2.4h2.8zm.6 7c0 1.1-.9 2-2 2s-2-.9-2-2 .9-2 2-2 2 .9 2 2zM8 9c.6 0 1-.4 1-1s-.4-1-1-1-1 .4-1 1 .4 1 1 1z"/></svg>
<div style="position:absolute;left:1852px;top:1644px;width:122px;height:56px;background:#3477c6;border-radius:4px;color:#fff;font-size:26px;line-height:56px;text-align:center">Cancel</div>
<div style="position:absolute;left:1652px;top:1724px;width:44px;height:4px;background:#2d6fc5"></div>
</body></html>
